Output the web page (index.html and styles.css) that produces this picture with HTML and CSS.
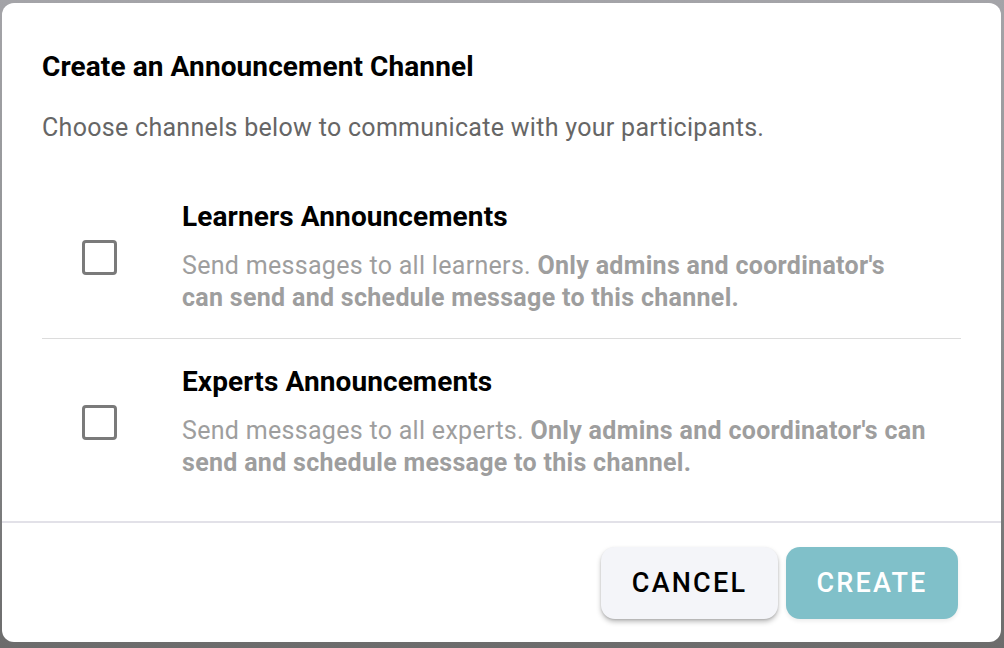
FILE: index.html
```html
<!DOCTYPE html>
<html lang="en">
<head>
<meta charset="utf-8">
<title>Create an Announcement Channel</title>
<link rel="stylesheet" href="styles.css">
</head>
<body>
<div class="dialog">
  <div class="content">
    <h1 class="title">Create an Announcement Channel</h1>
    <p class="subtitle">Choose channels below to communicate with your participants.</p>
    <div class="option">
      <div class="check-col"><span class="checkbox"></span></div>
      <div class="text-col">
        <h2 class="option-title">Learners Announcements</h2>
        <p class="option-desc">Send messages to all learners. <b>Only admins and coordinator's can send and schedule message to this channel.</b></p>
      </div>
    </div>
    <div class="option option-second">
      <div class="check-col"><span class="checkbox"></span></div>
      <div class="text-col">
        <h2 class="option-title">Experts Announcements</h2>
        <p class="option-desc">Send messages to all experts. <b>Only admins and coordinator's can send and schedule message to this channel.</b></p>
      </div>
    </div>
  </div>
  <div class="footer">
    <button class="btn btn-cancel">CANCEL</button>
    <button class="btn btn-create">CREATE</button>
  </div>
</div>
</body>
</html>
```
FILE: styles.css
```css
html, body {
  margin: 0;
  padding: 0;
}
body {
  width: 1004px;
  height: 648px;
  box-sizing: border-box;
  padding: 3px 3px 6px 2px;
  background: linear-gradient(180deg, #a4a4a8 0%, #8e9092 50%, #6c6c6c 100%);
  font-family: Roboto, "Liberation Sans", Arial, sans-serif;
  overflow: hidden;
}
.dialog {
  width: 999px;
  height: 639px;
  background: #fff;
  border-radius: 12px;
  display: flex;
  flex-direction: column;
  overflow: hidden;
}
.content {
  height: 518px;
  padding: 0 40px;
  box-sizing: border-box;
}
.title {
  margin: 47px 0 0 0;
  font-size: 28px;
  line-height: 34px;
  font-weight: 700;
  color: #000;
  letter-spacing: 0.1px;
}
.subtitle {
  margin: 28px 0 0 0;
  font-size: 25px;
  line-height: 32px;
  color: #666;
  letter-spacing: 0.3px;
}
.option {
  display: flex;
  align-items: center;
  padding: 57px 0 25px 0;
  border-bottom: 1px solid #dcdcdc;
}
.option-second {
  padding: 27px 0 0 0;
  border-bottom: none;
}
.check-col {
  width: 140px;
  flex: none;
  padding-left: 40px;
  box-sizing: border-box;
}
.checkbox {
  display: block;
  width: 29px;
  height: 29px;
  border: 3px solid #7a7a7a;
  border-radius: 4px;
}
.text-col {
  flex: 1;
  padding-right: 32px;
}
.option-title {
  margin: 0;
  font-size: 28px;
  line-height: 32px;
  font-weight: 700;
  color: #000;
  letter-spacing: 0.1px;
}
.option-desc {
  margin: 17px 0 0 0;
  font-size: 25px;
  line-height: 31.5px;
  color: #9e9e9e;
  letter-spacing: 0.3px;
}
.option-desc b {
  font-weight: 700;
  letter-spacing: 0.3px;
}
.footer {
  flex: 1;
  border-top: 2px solid #e2e1e8;
  display: flex;
  justify-content: flex-end;
  align-items: flex-start;
  gap: 8px;
  padding: 24px 43px 0 0;
}
.btn {
  height: 72px;
  border: none;
  border-radius: 14px;
  font-family: Roboto, "Liberation Sans", Arial, sans-serif;
  font-size: 27px;
  font-weight: 500;
  letter-spacing: 2.2px;
  cursor: pointer;
}
.btn-cancel {
  width: 177px;
  background: #f4f5f9;
  color: #000;
  box-shadow: 0 3px 5px rgba(0, 0, 0, 0.25), 0 1px 2px rgba(0, 0, 0, 0.12);
}
.btn-create {
  width: 172px;
  background: #80c0c9;
  color: #fff;
  box-shadow: 0 2px 4px rgba(0, 0, 0, 0.08);
}
```
